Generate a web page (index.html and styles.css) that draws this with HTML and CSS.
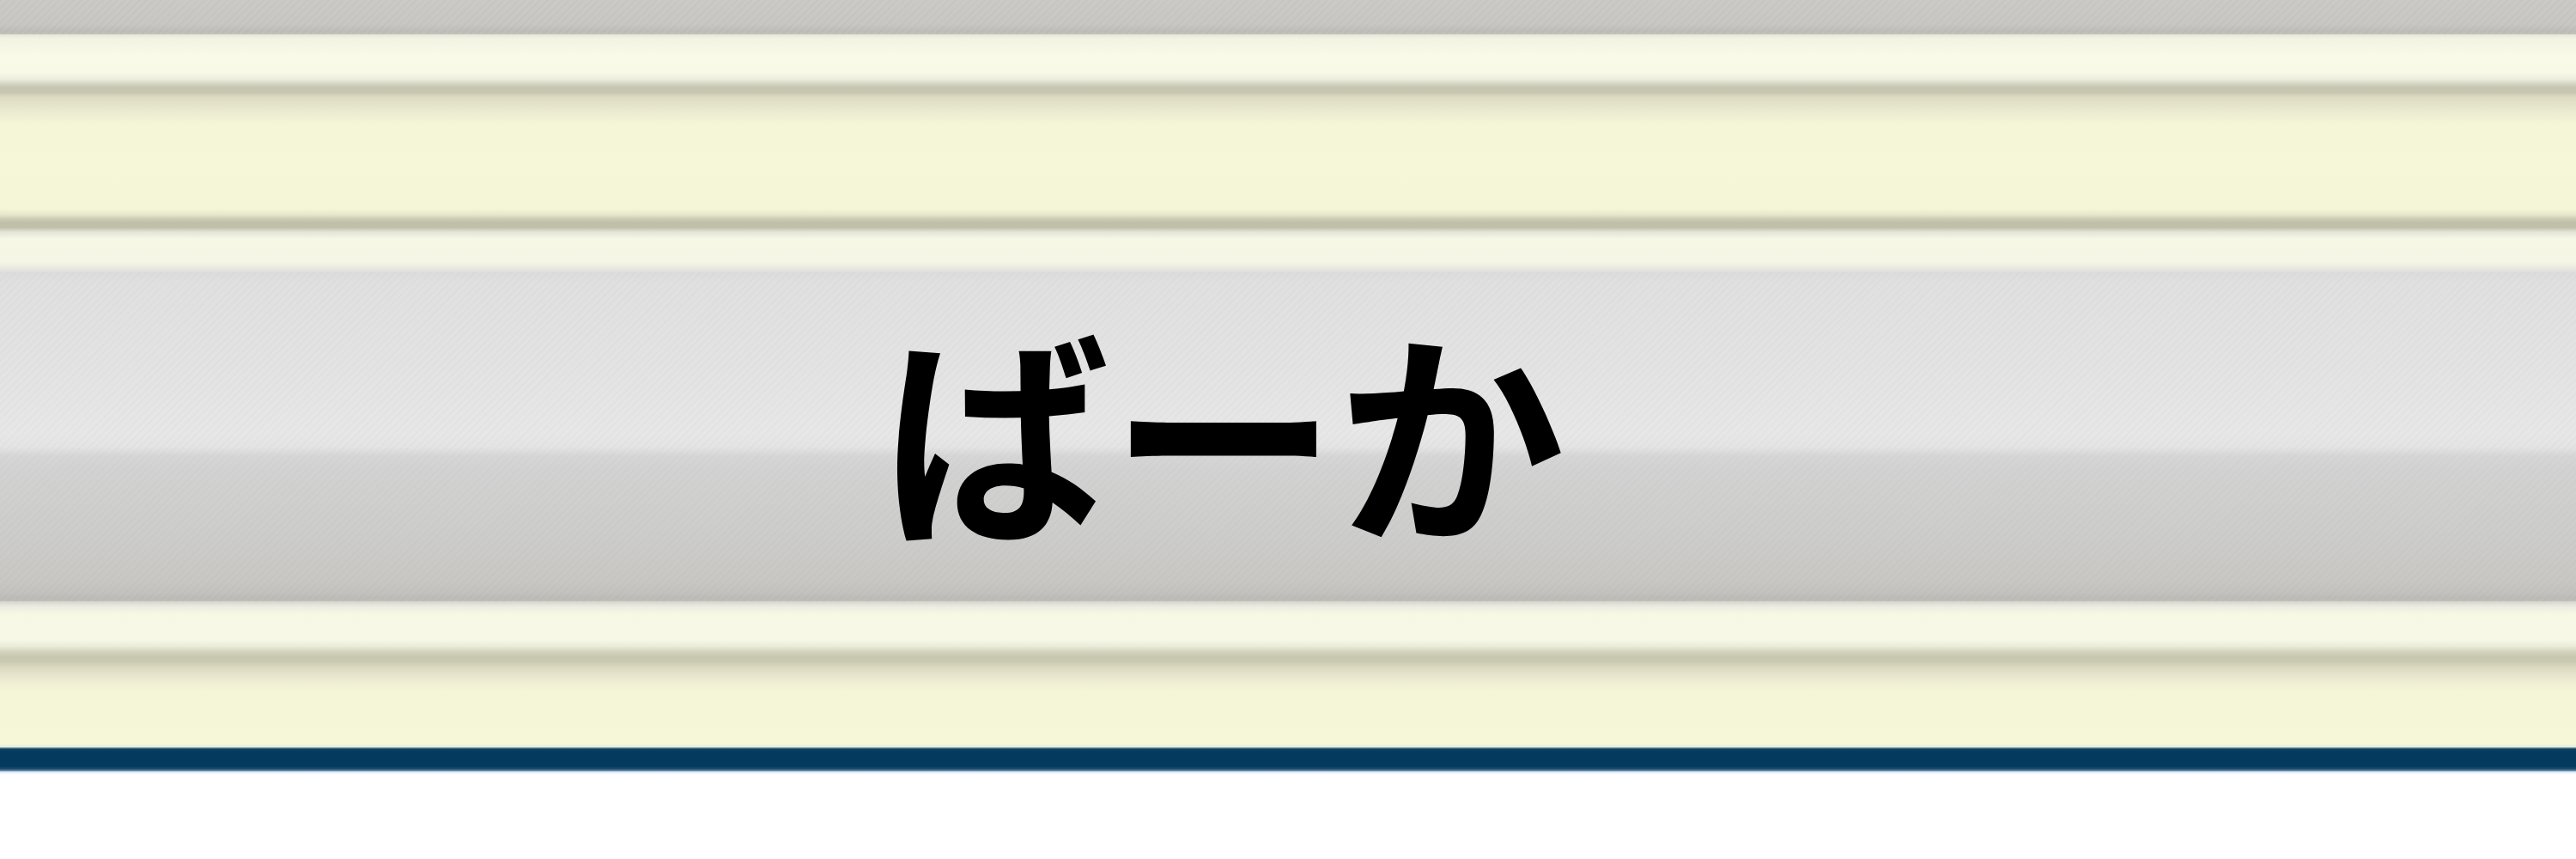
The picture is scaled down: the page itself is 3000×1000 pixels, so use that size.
FILE: index.html
```html
<!DOCTYPE html>
<html lang="ja">
<head>
<meta charset="utf-8">
<title>ばーか</title>
<link rel="stylesheet" href="styles.css">
</head>
<body>
<div class="frame">
  <div class="rail"></div>
  <div class="moulding moulding-top"></div>
  <div class="panel"><span class="label">ばーか</span></div>
  <div class="moulding moulding-bottom"></div>
  <div class="edge"></div>
  <div class="shine"></div>
</div>
</body>
</html>
```

FILE: styles.css
```css
html, body {
  margin: 0;
  padding: 0;
  background: #ffffff;
}

.frame {
  width: 3000px;
  display: flex;
  flex-direction: column;
}

.rail {
  height: 40px;
  background:
    repeating-linear-gradient(135deg, rgba(0,0,0,0.018) 0 2px, rgba(255,255,255,0) 2px 6px),
    linear-gradient(to bottom, #cbcac7 0px, #c8c7c4 28px, #bebdb9 37px, #c4c3bd 40px);
}

.moulding-top {
  height: 277px;
  background: linear-gradient(to bottom,
    #e6e6da 0px,
    #f2f3e2 5px,
    #f9fae8 25px,
    #f8f9e7 44px,
    #eeeedf 52px,
    #d8d8c6 57px,
    #c6c5b0 62px,
    #c7c6b0 68px,
    #dddcc3 73px,
    #ebebd2 90px,
    #f5f5d8 105px,
    #f6f6d9 150px,
    #f5f5d8 203px,
    #e6e6cc 210px,
    #cbcab3 215px,
    #bfbea8 220px,
    #c1c0ab 225px,
    #e4e4d6 230px,
    #f6f7e5 238px,
    #f5f6e5 265px,
    #ebebe0 271px,
    #dedede 277px);
}

.panel {
  height: 383px;
  display: flex;
  align-items: center;
  justify-content: center;
  padding-right: 150px;
  box-sizing: border-box;
  background:
    repeating-linear-gradient(135deg, rgba(0,0,0,0.016) 0 2px, rgba(255,255,255,0) 2px 6px),
    linear-gradient(to bottom,
      #dcdcdc 0px,
      #e0e0e0 12px,
      #e3e3e3 110px,
      #e7e7e7 188px,
      #e4e4e4 203px,
      #d6d6d6 214px,
      #d2d2d2 230px,
      #cdcdcb 300px,
      #c8c7c4 360px,
      #c2c1bd 374px,
      #bcbbb7 380px,
      #c2c1bb 383px);
}

.label {
  font-family: "Noto Sans CJK JP", "Noto Sans", sans-serif;
  font-weight: 700;
  font-size: 265px;
  line-height: 1;
  color: #000000;
  margin-top: -22px;
  letter-spacing: 0;
}

.moulding-bottom {
  height: 170px;
  background: linear-gradient(to bottom,
    #d5d5cd 0px,
    #ebebe1 6px,
    #f6f7e5 14px,
    #f7f8e6 44px,
    #ececdc 52px,
    #d6d5c0 58px,
    #c8c7b0 64px,
    #c9c8b1 70px,
    #dddcc3 78px,
    #ececd2 92px,
    #f5f5d8 105px,
    #f6f6d8 166px,
    #e3e8da 170px);
}

.edge {
  height: 28px;
  background: linear-gradient(to bottom,
    #9fb6c0 0px,
    #0a3f62 2px,
    #043a5e 6px,
    #043a5e 22px,
    #1b4b6b 25px,
    #5f80a0 27px,
    #8eaacb 28px);
}

.shine {
  height: 4px;
  background: linear-gradient(to bottom, #c9dcee 0px, #eef5fb 2px, #ffffff 4px);
}
```
